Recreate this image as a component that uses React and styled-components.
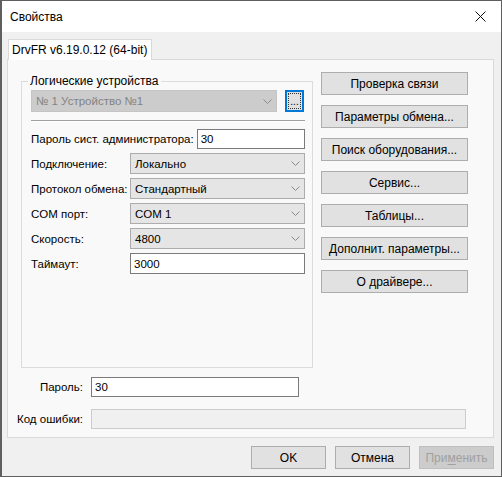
import React from 'react';
import styled, { createGlobalStyle } from 'styled-components';

const GlobalStyle = createGlobalStyle`
	html,
	body {
		margin: 0;
		padding: 0;
		background: #ffffff;
	}
	* {
		box-sizing: border-box;
	}
`;

/* window frame */

const Window = styled.div`
	width: 502px;
	height: 477px;
	border: 1px solid #5f5f5f;
	border-left-width: 2px;
	display: flex;
	flex-direction: column;
	background: #f0f0f0;
	font-family: 'Liberation Sans', Arial, sans-serif;
	color: #000;
	overflow: hidden;
`;

const TitleBar = styled.div`
	height: 31px;
	flex: none;
	background: #ffffff;
	display: flex;
	align-items: center;
	justify-content: space-between;
	padding-left: 8px;
	font-size: 12px;
`;

const CloseBox = styled.div`
	width: 46px;
	height: 31px;
	display: flex;
	align-items: center;
	justify-content: center;
	padding-left: 4px;
`;

const Body = styled.div`
	flex: 1;
	display: flex;
	flex-direction: column;
	padding: 7px 7px 0 5px;
`;

/* tabs */

const TabStrip = styled.div`
	display: flex;
	height: 20px;
	padding-left: 1px;
`;

const Tab = styled.div`
	background: #ffffff;
	border: 1px solid #d9d9d9;
	border-bottom: none;
	padding: 0 4px 0 3px;
	font-size: 12px;
	line-height: 20px;
	position: relative;
	z-index: 1;
	height: 21px;
`;

const TabPage = styled.div`
	border: 1px solid #d9d9d9;
	background: #f9f9f9;
	height: 379px;
	padding: 12px 0 0 13px;
	display: flex;
	flex-direction: column;
`;

const TopArea = styled.div`
	display: flex;
	gap: 8px;
	align-items: flex-start;
`;

/* group box */

const Group = styled.div`
	position: relative;
	width: 292px;
	height: 287px;
	margin-top: 9px;
	border: 1px solid #dcdcdc;
	padding: 8px 7px 0 9px;
	display: flex;
	flex-direction: column;
`;

const Legend = styled.span`
	position: absolute;
	left: 6px;
	top: -8px;
	padding: 0 3px 0 2px;
	background: #f9f9f9;
	font-size: 12px;
	line-height: 14px;
`;

const DeviceRow = styled.div`
	display: flex;
	gap: 8px;
	height: 22px;
`;

const Separator = styled.div`
	height: 2px;
	border-top: 1px solid #a0a0a0;
	border-bottom: 1px solid #ffffff;
	margin: 8px 0 7px;
`;

const Field = styled.div`
	display: flex;
	align-items: center;
	height: ${(p) => p.h || 21}px;
	margin-bottom: ${(p) => p.mb ?? 4}px;
`;

const Label = styled.span`
	font-size: 11.5px;
	white-space: nowrap;
	flex: none;
	width: ${(p) => (p.w ? `${p.w}px` : 'auto')};
	padding-right: ${(p) => p.pr || 0}px;
`;

const Combo = styled.div`
	flex: ${(p) => (p.w ? 'none' : 1)};
	width: ${(p) => (p.w ? `${p.w}px` : 'auto')};
	height: 100%;
	display: flex;
	align-items: center;
	justify-content: space-between;
	padding: 0 4px 0 4px;
	background: ${(p) => (p.disabled ? '#cccccc' : '#e5e5e5')};
	border: 1px solid ${(p) => (p.disabled ? '#c5c5c5' : '#acacac')};
	color: ${(p) => (p.disabled ? '#838383' : '#000')};
	font-size: 11.5px;
`;

const Edit = styled.div`
	flex: ${(p) => (p.w ? 'none' : 1)};
	width: ${(p) => (p.w ? `${p.w}px` : 'auto')};
	height: 100%;
	display: flex;
	align-items: center;
	padding: 0 3px;
	background: ${(p) => (p.disabled ? '#f0f0f0' : '#ffffff')};
	border: 1px solid ${(p) => (p.disabled ? '#cccccc' : '#7a7a7a')};
	font-size: 11.5px;
`;

const EllipsisButton = styled.div`
	width: 19px;
	height: 22px;
	border: 2px solid #0078d7;
	background: #e1e1e1;
	display: flex;
	align-items: flex-end;
	justify-content: center;
	padding-bottom: 3px;
	font-size: 10px;
	line-height: 10px;
	outline: 1px dotted #333;
	outline-offset: -4px;
`;

/* side buttons */

const SideButtons = styled.div`
	display: flex;
	flex-direction: column;
	gap: 10px;
	width: 147px;
`;

const Button = styled.div`
	height: 23px;
	width: ${(p) => (p.w ? `${p.w}px` : '100%')};
	display: flex;
	align-items: center;
	justify-content: center;
	background: ${(p) => (p.disabled ? '#cccccc' : '#e1e1e1')};
	border: 1px solid ${(p) => (p.disabled ? '#bfbfbf' : '#adadad')};
	color: ${(p) => (p.disabled ? '#a0a0a0' : '#000')};
	font-size: 12px;
	white-space: nowrap;

	u {
		text-decoration-thickness: 1px;
		text-underline-offset: 2px;
	}
`;

/* password / error code block */

const BottomGrid = styled.div`
	display: grid;
	grid-template-columns: 66px auto;
	column-gap: 8px;
	row-gap: 12px;
	margin-top: 9px;
	margin-left: -4px;
	align-items: center;
`;

const RightLabel = styled.span`
	font-size: 11.5px;
	text-align: right;
	white-space: nowrap;
`;

const FooterButtons = styled.div`
	display: flex;
	justify-content: flex-end;
	gap: 9px;
	margin-top: 8px;
`;

const Chevron = () => (
	<svg width='9' height='5' viewBox='0 0 9 5'>
		<polyline points='0.5,0.5 4.5,4.5 8.5,0.5' fill='none' stroke='#8a8a8a' strokeWidth='1' />
	</svg>
);

const CloseIcon = () => (
	<svg width='11' height='11' viewBox='0 0 11 11'>
		<path d='M0.5 0.5 L10.5 10.5 M10.5 0.5 L0.5 10.5' stroke='#111' strokeWidth='1' />
	</svg>
);

const comboRows = [
	{ label: 'Подключение:', value: 'Локально' },
	{ label: 'Протокол обмена:', value: 'Стандартный' },
	{ label: 'COM порт:', value: 'COM 1' },
	{ label: 'Скорость:', value: '4800' },
];

const sideButtons = [
	'Проверка связи',
	'Параметры обмена...',
	'Поиск оборудования...',
	'Сервис...',
	'Таблицы...',
	'Дополнит. параметры...',
	'О драйвере...',
];

export default function App() {
	return (
		<>
			<GlobalStyle />
			<Window>
				<TitleBar>
					<span>Свойства</span>
					<CloseBox>
						<CloseIcon />
					</CloseBox>
				</TitleBar>
				<Body>
					<TabStrip>
						<Tab>DrvFR v6.19.0.12 (64-bit)</Tab>
					</TabStrip>
					<TabPage>
						<TopArea>
							<Group>
								<Legend>Логические устройства</Legend>
								<DeviceRow>
									<Combo w={246} disabled>
										<span>№ 1 Устройство №1</span>
										<Chevron />
									</Combo>
									<EllipsisButton>...</EllipsisButton>
								</DeviceRow>
								<Separator />
								<Field h={20}>
									<Label pr={3}>Пароль сист. администратора:</Label>
									<Edit>30</Edit>
								</Field>
								{comboRows.map((row) => (
									<Field key={row.label}>
										<Label w={99}>{row.label}</Label>
										<Combo>
											<span>{row.value}</span>
											<Chevron />
										</Combo>
									</Field>
								))}
								<Field mb={0}>
									<Label w={99}>Таймаут:</Label>
									<Edit>3000</Edit>
								</Field>
							</Group>
							<SideButtons>
								{sideButtons.map((title) => (
									<Button key={title}>{title}</Button>
								))}
							</SideButtons>
						</TopArea>
						<BottomGrid>
							<RightLabel>Пароль:</RightLabel>
							<Field h={20} mb={0}>
								<Edit w={208}>30</Edit>
							</Field>
							<RightLabel>Код ошибки:</RightLabel>
							<Field h={20} mb={0}>
								<Edit w={375} disabled />
							</Field>
						</BottomGrid>
					</TabPage>
					<FooterButtons>
						<Button w={75}>OK</Button>
						<Button w={75}>Отмена</Button>
						<Button w={75} disabled>
							При<u>м</u>енить
						</Button>
					</FooterButtons>
				</Body>
			</Window>
		</>
	);
}
